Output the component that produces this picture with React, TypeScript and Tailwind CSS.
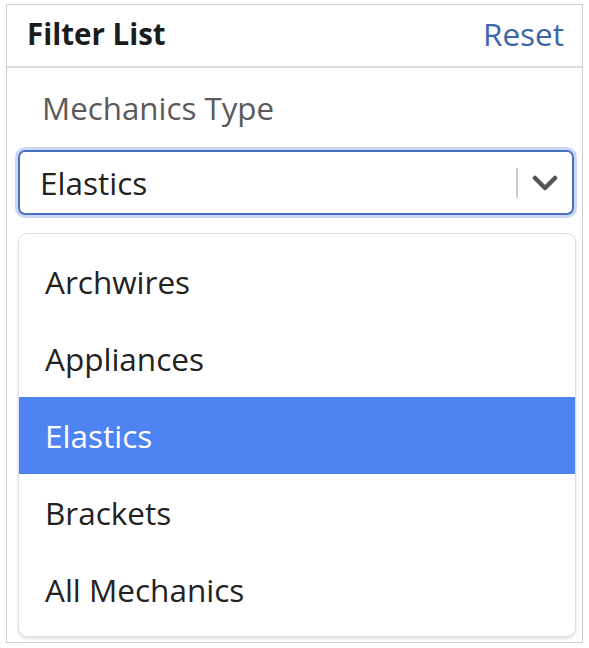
import { useState } from "react";

const options = ["Archwires", "Appliances", "Elastics", "Brackets", "All Mechanics"];

const App = () => {
  const [selected, setSelected] = useState("Elastics");

  return (
    <div className="w-[589px] h-[648px] bg-white pt-[4px] pl-[6px] font-['Open_Sans',sans-serif] overflow-hidden">
      <div className="w-[577px] h-[639px] border border-[#cfcfcf] flex flex-col">
        {/* Header */}
        <div className="h-[63px] shrink-0 flex items-center justify-between pl-[20px] pr-[18px] pb-[4px] border-b-2 border-[#dcdcdc]">
          <h2 className="text-[29.5px] leading-[42px] font-bold text-[#1c1c1c]">Filter List</h2>
          <button className="text-[31.5px] leading-[42px] text-[#3d66a7]">Reset</button>
        </div>

        {/* Body */}
        <div className="flex flex-col pl-[11px] pr-[8px]">
          <label className="mt-[19px] pl-[24px] text-[31.3px] leading-[42px] text-[#5a5a5a]">Mechanics Type</label>

          <div className="mt-[21px] h-[65px] flex items-center border-2 border-[#4a6fbf] rounded-[7px] ring-[3px] ring-[#c9d7f3]">
            <span className="flex-1 pl-[20px] text-[31.5px] leading-[42px] text-[#222]">{selected}</span>
            <div className="w-[2px] h-[30px] bg-[#cccccc]" />
            <div className="w-[54px] flex items-center justify-center">
              <svg width="26" height="16" viewBox="0 0 26 16" fill="none">
                <polyline points="3,3 13,13 23,3" stroke="#555" strokeWidth="4.5" strokeLinecap="round" strokeLinejoin="round" />
              </svg>
            </div>
          </div>

          {/* Menu */}
          <ul className="mt-[18px] mr-[-2px] pt-[9px] pb-[8px] border border-[#dedede] rounded-[9px] bg-white shadow-[0_2px_3px_rgba(0,0,0,0.12)]">
            {options.map((option) => (
              <li
                key={option}
                onClick={() => setSelected(option)}
                className={
                  option === selected
                    ? "h-[77px] flex items-center pl-[26px] text-[31.5px] leading-[42px] bg-[#4e83f4] text-white"
                    : "h-[77px] flex items-center pl-[26px] text-[31.5px] leading-[42px] text-[#222]"
                }
              >
                {option}
              </li>
            ))}
          </ul>
        </div>
      </div>
    </div>
  );
};

export default App;
